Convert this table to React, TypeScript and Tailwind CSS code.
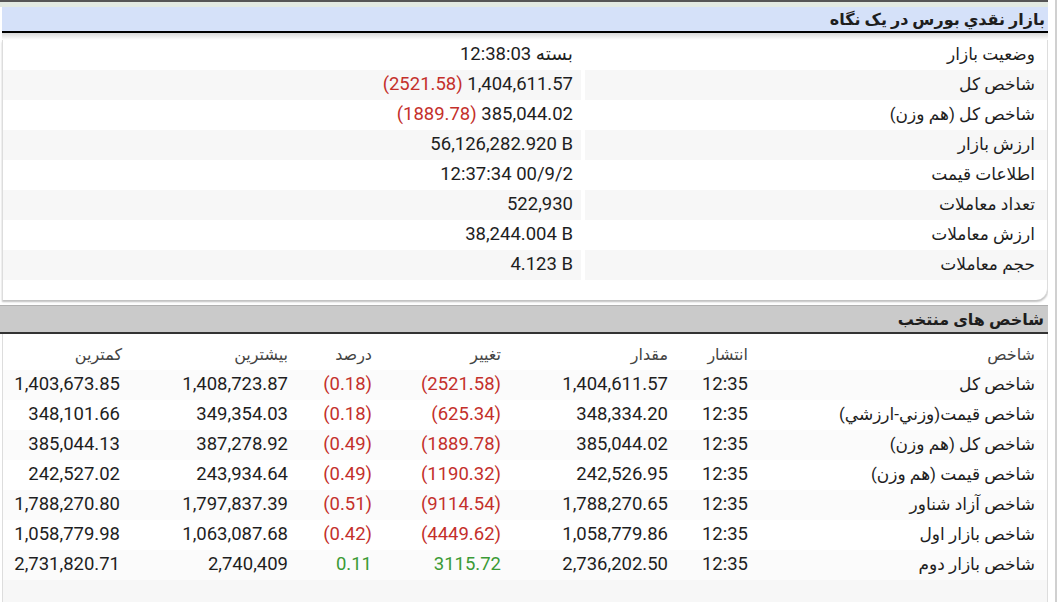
import React from 'react'

const font = { fontFamily: "Roboto, 'DejaVu Sans', sans-serif" }

type Pair = { label: string; value: React.ReactNode }

const red = 'text-[#c4302b]'
const green = 'text-[#3a9a35]'

const summary: Pair[] = [
  {
    label: 'وضعیت بازار',
    value: (
      <>
        <span>بسته</span> <span dir="ltr">12:38:03</span>
      </>
    ),
  },
  {
    label: 'شاخص کل',
    value: (
      <>
        <span dir="ltr">1,404,611.57</span> <span dir="ltr" className={red}>(2521.58)</span>
      </>
    ),
  },
  {
    label: 'شاخص کل (هم وزن)',
    value: (
      <>
        <span dir="ltr">385,044.02</span> <span dir="ltr" className={red}>(1889.78)</span>
      </>
    ),
  },
  { label: 'ارزش بازار', value: <span dir="ltr">56,126,282.920 B</span> },
  {
    label: 'اطلاعات قیمت',
    value: (
      <>
        <span dir="ltr">00/9/2</span> <span dir="ltr">12:37:34</span>
      </>
    ),
  },
  { label: 'تعداد معاملات', value: <span dir="ltr">522,930</span> },
  { label: 'ارزش معاملات', value: <span dir="ltr">38,244.004 B</span> },
  { label: 'حجم معاملات', value: <span dir="ltr">4.123 B</span> },
]

type Index = {
  name: string
  time: string
  value: string
  change: string
  pct: string
  high: string
  low: string
  up?: boolean
}

const indices: Index[] = [
  { name: 'شاخص کل', time: '12:35', value: '1,404,611.57', change: '(2521.58)', pct: '(0.18)', high: '1,408,723.87', low: '1,403,673.85' },
  { name: 'شاخص قيمت(وزني-ارزشي)', time: '12:35', value: '348,334.20', change: '(625.34)', pct: '(0.18)', high: '349,354.03', low: '348,101.66' },
  { name: 'شاخص کل (هم وزن)', time: '12:35', value: '385,044.02', change: '(1889.78)', pct: '(0.49)', high: '387,278.92', low: '385,044.13' },
  { name: 'شاخص قيمت (هم وزن)', time: '12:35', value: '242,526.95', change: '(1190.32)', pct: '(0.49)', high: '243,934.64', low: '242,527.02' },
  { name: 'شاخص آزاد شناور', time: '12:35', value: '1,788,270.65', change: '(9114.54)', pct: '(0.51)', high: '1,797,837.39', low: '1,788,270.80' },
  { name: 'شاخص بازار اول', time: '12:35', value: '1,058,779.86', change: '(4449.62)', pct: '(0.42)', high: '1,063,087.68', low: '1,058,779.98' },
  { name: 'شاخص بازار دوم', time: '12:35', value: '2,736,202.50', change: '3115.72', pct: '0.11', high: '2,740,409', low: '2,731,820.71', up: true },
]

const cols = 'grid grid-cols-[293px_80px_167px_129px_84px_166px_126px]'

const App = () => {
  return (
    <div dir="ltr" style={font} className="w-[1064px] h-[602px] overflow-hidden bg-white flex text-[#1e1e1e]">
      {/* main column */}
      <div dir="rtl" className="w-[1048px] flex flex-col">
        <div className="h-[2px] bg-[#555]" />
        <div className="h-[5px] bg-[#e2e9e2]" />
        <div className="h-[26px] bg-[#d5e1f9] border-b-2 border-black w-[1046px] flex items-center pr-[3px]">
          <span className="text-[16px] font-bold leading-none pt-[2px]">بازار نقدي بورس در يک نگاه</span>
        </div>
        <div className="h-[7px] w-[1046px] bg-gradient-to-b from-[#d8d8d8] to-white" />

        {/* summary panel */}
        <div className="w-[1046px] border-l border-r border-[#ddd] rounded-br-xl shadow-[0_2px_2px_rgba(0,0,0,0.25)] pb-[20px] bg-white">
          {summary.map((row, i) => (
            <div key={i} className="flex h-[30px]">
              <div
                className={`w-[462px] flex items-center pr-[12px] text-[17px] ${i % 2 === 1 ? 'bg-[#f7f7f7]' : 'bg-white'}`}
              >
                {row.label}
              </div>
              <div className="w-[4px]" />
              <div
                className={`flex-1 flex items-center pr-[8px] text-[18.5px] ${i % 2 === 1 ? 'bg-[#f7f7f7]' : 'bg-white'}`}
              >
                <span className="whitespace-pre">{row.value}</span>
              </div>
            </div>
          ))}
        </div>

        <div className="h-[5px]" />
        <div className="h-[29px] bg-[#cacaca] border-t border-[#b0b0b0] border-b-2 border-b-[#333] flex items-center pr-[4px]">
          <span className="text-[16px] font-bold leading-none pt-[2px]">شاخص های منتخب</span>
        </div>

        {/* indices table */}
        <div className="flex-1 w-[1046px] border-l border-r border-[#ddd] flex flex-col">
          <div className={`${cols} h-[36px] items-end pb-[3px] text-[16px] text-[#444] bg-white`}>
            <div className="pr-[12px]">شاخص</div>
            <div className="pr-[6px]">انتشار</div>
            <div className="pr-[6px]">مقدار</div>
            <div className="pr-[6px]">تغییر</div>
            <div className="pr-[6px]">درصد</div>
            <div className="pr-[6px]">بیشترین</div>
            <div className="pr-[6px]">کمترین</div>
          </div>
          {indices.map((r, i) => (
            <div
              key={i}
              className={`${cols} h-[30px] items-center text-[18.5px] ${i % 2 === 0 ? 'bg-[#fbfbfb]' : 'bg-white'}`}
            >
              <div className="pr-[12px] text-[17px]">{r.name}</div>
              <div className="pr-[6px]"><span dir="ltr">{r.time}</span></div>
              <div className="pr-[6px]"><span dir="ltr">{r.value}</span></div>
              <div className={`pr-[6px] ${r.up ? green : red}`}><span dir="ltr">{r.change}</span></div>
              <div className={`pr-[6px] ${r.up ? green : red}`}><span dir="ltr">{r.pct}</span></div>
              <div className="pr-[6px]"><span dir="ltr">{r.high}</span></div>
              <div className="pr-[8px]"><span dir="ltr">{r.low}</span></div>
            </div>
          ))}
          <div className="flex-1 bg-[#f7f7f7]" />
        </div>
      </div>

      {/* right strip */}
      <div className="w-[16px] flex bg-white">
        <div className="w-[7px]" />
        <div className="w-[2px] bg-[#d0d0d0]" />
      </div>
    </div>
  )
}

export default App
